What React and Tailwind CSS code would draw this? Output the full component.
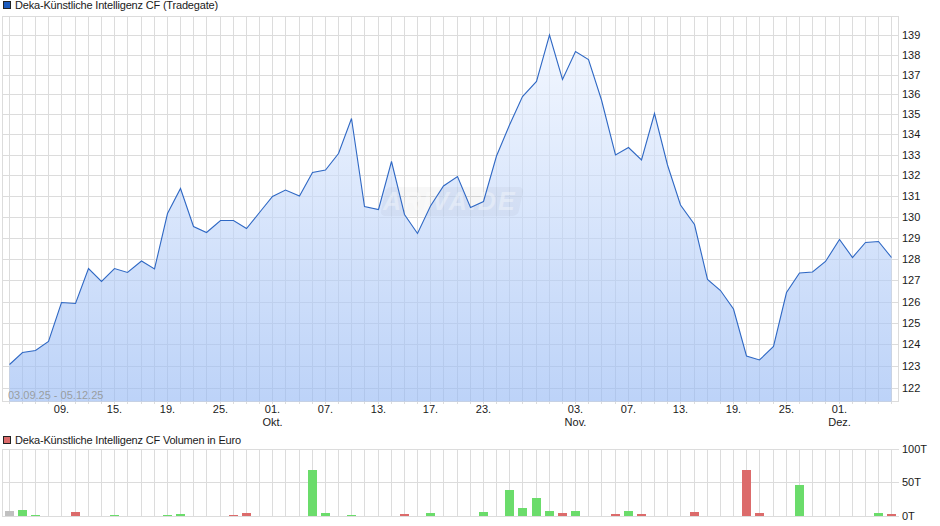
const PRICE_Y = [364.5, 352.5, 350.5, 341.5, 302.5, 303.5, 268.5, 281.5, 268.5, 272.5, 261, 269, 213.5, 188.5, 226.5, 232.5, 220.5, 220.5, 228.5, 212.5, 196.5, 190, 196, 172.5, 170, 153.5, 118.5, 206.5, 209.5, 161.5, 214.5, 233.5, 206, 186, 176.5, 207.5, 201.5, 156, 125, 96.5, 81.5, 35, 79.5, 51.5, 59.5, 100, 155, 147.5, 160, 113.5, 165, 205, 224.5, 279.5, 290.5, 309, 356, 360, 346.5, 292.5, 273, 272, 261.5, 239.5, 257.5, 242.5, 241.5, 257.5]

const PRICE_LINES = [
  [139, 35], [138, 55], [137, 75], [136, 94], [135, 114], [134, 134], [133, 155], [132, 175], [131, 196],
  [130, 217], [129, 238], [128, 259], [127, 280], [126, 302], [125, 323], [124, 344], [123, 366], [122, 388],
]

const DATE_LABELS = [
  [4, '09.'], [8, '15.'], [12, '19.'], [16, '25.'], [20, '01.', 'Okt.'], [24, '07.'], [28, '13.'], [32, '17.'],
  [36, '23.'], [43, '03.', 'Nov.'], [47, '07.'], [51, '13.'], [55, '19.'], [59, '25.'], [63, '01.', 'Dez.'],
]

const GREEN = '#6bdc6b'
const RED = '#dc6b6b'
const GRAY = '#c0c0c0'

// [index, height, colour]
const VOLUME_BARS = [
  [0, 5, GRAY], [1, 6, GREEN], [2, 1, GREEN], [5, 4, RED], [8, 1, GREEN], [12, 1, GREEN], [13, 2, GREEN],
  [17, 1, RED], [18, 3, RED], [23, 46, GREEN], [24, 3, GREEN], [26, 1, GREEN], [30, 2, RED], [32, 3, GREEN],
  [36, 4, GREEN], [38, 26, GREEN], [39, 8, GREEN], [40, 18, GREEN], [41, 5, GREEN], [42, 3, RED], [43, 5, GREEN],
  [46, 2, RED], [47, 5, GREEN], [48, 2, RED], [52, 4, RED], [56, 46, RED], [57, 3, RED], [60, 31, GREEN],
  [66, 3, GREEN], [67, 2, RED],
]

const GRID = '#dcdcdc'
const INK = '#1a1a1a'

function xAt(index) {
  return Math.floor(9.3 + index * 13.17) + 0.5
}

const COLUMNS = PRICE_Y.map((_, index) => xAt(index))
const LINE_POINTS = PRICE_Y.map((y, index) => `${xAt(index)},${y}`).join(' ')
const AREA_POINTS = `${xAt(0)},401.5 ${LINE_POINTS} ${xAt(67)},401.5`

function Legend({ swatch, children }) {
  return (
    <div className="flex h-[16px] items-center gap-[4px] pl-[3px] text-[11px] leading-none tracking-[-0.18px] text-[#1a1a1a]">
      <span className={`h-[8px] w-[8px] border border-[#222] ${swatch}`} />
      <span>{children}</span>
    </div>
  )
}

function PriceChart() {
  return (
    <svg width="940" height="416" viewBox="0 16 940 416" className="block">
      <defs>
        <linearGradient id="area" gradientUnits="userSpaceOnUse" x1="0" y1="35" x2="0" y2="401">
          <stop offset="0" stopColor="#ecf3ff" />
          <stop offset="1" stopColor="#96b9f4" />
        </linearGradient>
      </defs>

      <rect x="2.5" y="16.5" width="896" height="385" fill="#fff" stroke={GRID} />
      {PRICE_LINES.map(([label, y]) => (
        <line key={label} x1="3" x2="898" y1={y + 0.5} y2={y + 0.5} stroke={GRID} />
      ))}
      {COLUMNS.map((x) => (
        <line key={x} x1={x} x2={x} y1="17" y2="404" stroke={GRID} />
      ))}

      <polygon points={AREA_POINTS} fill="url(#area)" fillOpacity="0.63" />

      <g transform="translate(380 187) skewX(-12)">
        <rect x="6" y="0" width="138" height="29" rx="5" fill="#000" fillOpacity="0.03" />
      </g>
      <text x="383" y="210" fill="#fff" fillOpacity="0.35" fontSize="25" fontWeight="700" fontStyle="italic" letterSpacing="2">
        ARIVA.DE
      </text>

      <polyline points={LINE_POINTS} fill="none" stroke="#2f68c4" strokeWidth="1.1" />

      <text x="8" y="399" fill="#8f8f88" fillOpacity="0.8" fontSize="11">
        03.09.25 - 05.12.25
      </text>

      {PRICE_LINES.map(([label, y]) => (
        <text key={label} x="902" y={y + 4} fill={INK} fontSize="11">
          {label}
        </text>
      ))}
      {DATE_LABELS.map(([index, day, month]) => (
        <text key={index} x={xAt(index)} y="413" fill={INK} fontSize="11" textAnchor="middle">
          <tspan>{day}</tspan>
          {month && (
            <tspan x={xAt(index)} dy="13">
              {month}
            </tspan>
          )}
        </text>
      ))}
    </svg>
  )
}

function VolumeChart() {
  return (
    <svg width="940" height="83" viewBox="0 443 940 83" className="block">
      {[449.5, 482.5, 516.5].map((y) => (
        <line key={y} x1="2" x2="899" y1={y} y2={y} stroke={GRID} />
      ))}
      <line x1="2.5" x2="2.5" y1="449" y2="517" stroke={GRID} />
      {COLUMNS.map((x) => (
        <line key={x} x1={x} x2={x} y1="449" y2="517" stroke={GRID} />
      ))}
      {VOLUME_BARS.map(([index, height, color]) => (
        <rect key={index} x={xAt(index) - 4.5} y={516 - height} width="9" height={height} fill={color} />
      ))}
      <text x="902" y="453" fill={INK} fontSize="11">100T</text>
      <text x="902" y="486" fill={INK} fontSize="11">50T</text>
      <text x="902" y="520" fill={INK} fontSize="11">0T</text>
    </svg>
  )
}

export default function App() {
  return (
    <div className="h-[526px] w-[940px] overflow-hidden bg-white font-['Liberation_Sans',Arial,sans-serif]">
      <div className="h-[16px] -translate-y-[3px]">
        <Legend swatch="bg-[#1c5bbd]">Deka-Künstliche Intelligenz CF (Tradegate)</Legend>
      </div>
      <PriceChart />
      <div className="flex h-[11px] items-start">
        <Legend swatch="bg-[#dc6b6b]">Deka-Künstliche Intelligenz CF Volumen in Euro</Legend>
      </div>
      <VolumeChart />
    </div>
  )
}
